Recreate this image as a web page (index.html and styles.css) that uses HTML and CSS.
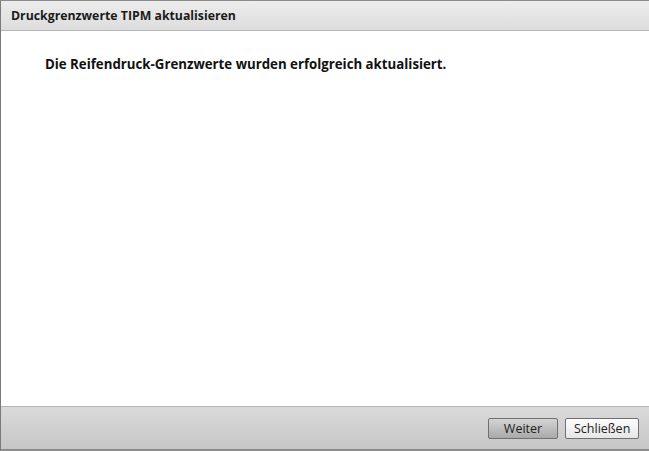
FILE: index.html
```html
<!DOCTYPE html>
<html>
<head>
<meta charset="utf-8">
<link rel="stylesheet" href="styles.css">
</head>
<body>
<div class="window">
  <div class="titlebar"><span class="title">Druckgrenzwerte TIPM aktualisieren</span></div>
  <div class="content">
    <p class="message">Die Reifendruck-Grenzwerte wurden erfolgreich aktualisiert.</p>
  </div>
  <div class="footer">
    <button class="btn btn-default">Weiter</button>
    <button class="btn">Schließen</button>
  </div>
</div>
</body>
</html>
```
FILE: styles.css
```css
html, body {
  margin: 0;
  padding: 0;
  background: #ffffff;
}
body {
  width: 649px;
  height: 451px;
  overflow: hidden;
  font-family: "Open Sans", "DejaVu Sans", sans-serif;
}
.window {
  box-sizing: border-box;
  width: 649px;
  height: 451px;
  display: flex;
  flex-direction: column;
  border-left: 1px solid #7a7a7a;
  border-top: 1px solid #8a8a8a;
  border-bottom: 2px solid #8c8c8c;
  background: #fff;
}
.titlebar {
  height: 30px;
  box-sizing: border-box;
  background: linear-gradient(#ececec, #dddddd);
  border-bottom: 1px solid #b8b8b8;
  display: flex;
  align-items: center;
  padding-left: 10px;
}
.title {
  font-weight: 700;
  font-size: 12.3px;
  color: #1a1a1a;
}
.content {
  flex: 1;
  padding: 0 0 0 44px;
}
.message {
  margin: 24px 0 0 0;
  font-weight: 700;
  font-size: 13.25px;
  line-height: 18px;
  color: #111;
}
.footer {
  height: 43px;
  box-sizing: border-box;
  border-top: 1px solid #b4b4b4;
  background: linear-gradient(#dadada, #c6c6c6);
  display: flex;
  align-items: center;
  justify-content: flex-end;
  gap: 7px;
  padding-right: 10px;
}
.btn {
  box-sizing: border-box;
  height: 21px;
  padding: 0 8px;
  font-family: inherit;
  font-size: 12.5px;
  color: #222;
  border: 1px solid #707070;
  border-radius: 2px;
  background: linear-gradient(#fdfdfd, #e6e6e6);
  line-height: 19px;
}
.btn-default {
  width: 70px;
  background: linear-gradient(#d4d4d4, #a9a9a9);
}
.btn:not(.btn-default) {
  width: 74px;
}
```
